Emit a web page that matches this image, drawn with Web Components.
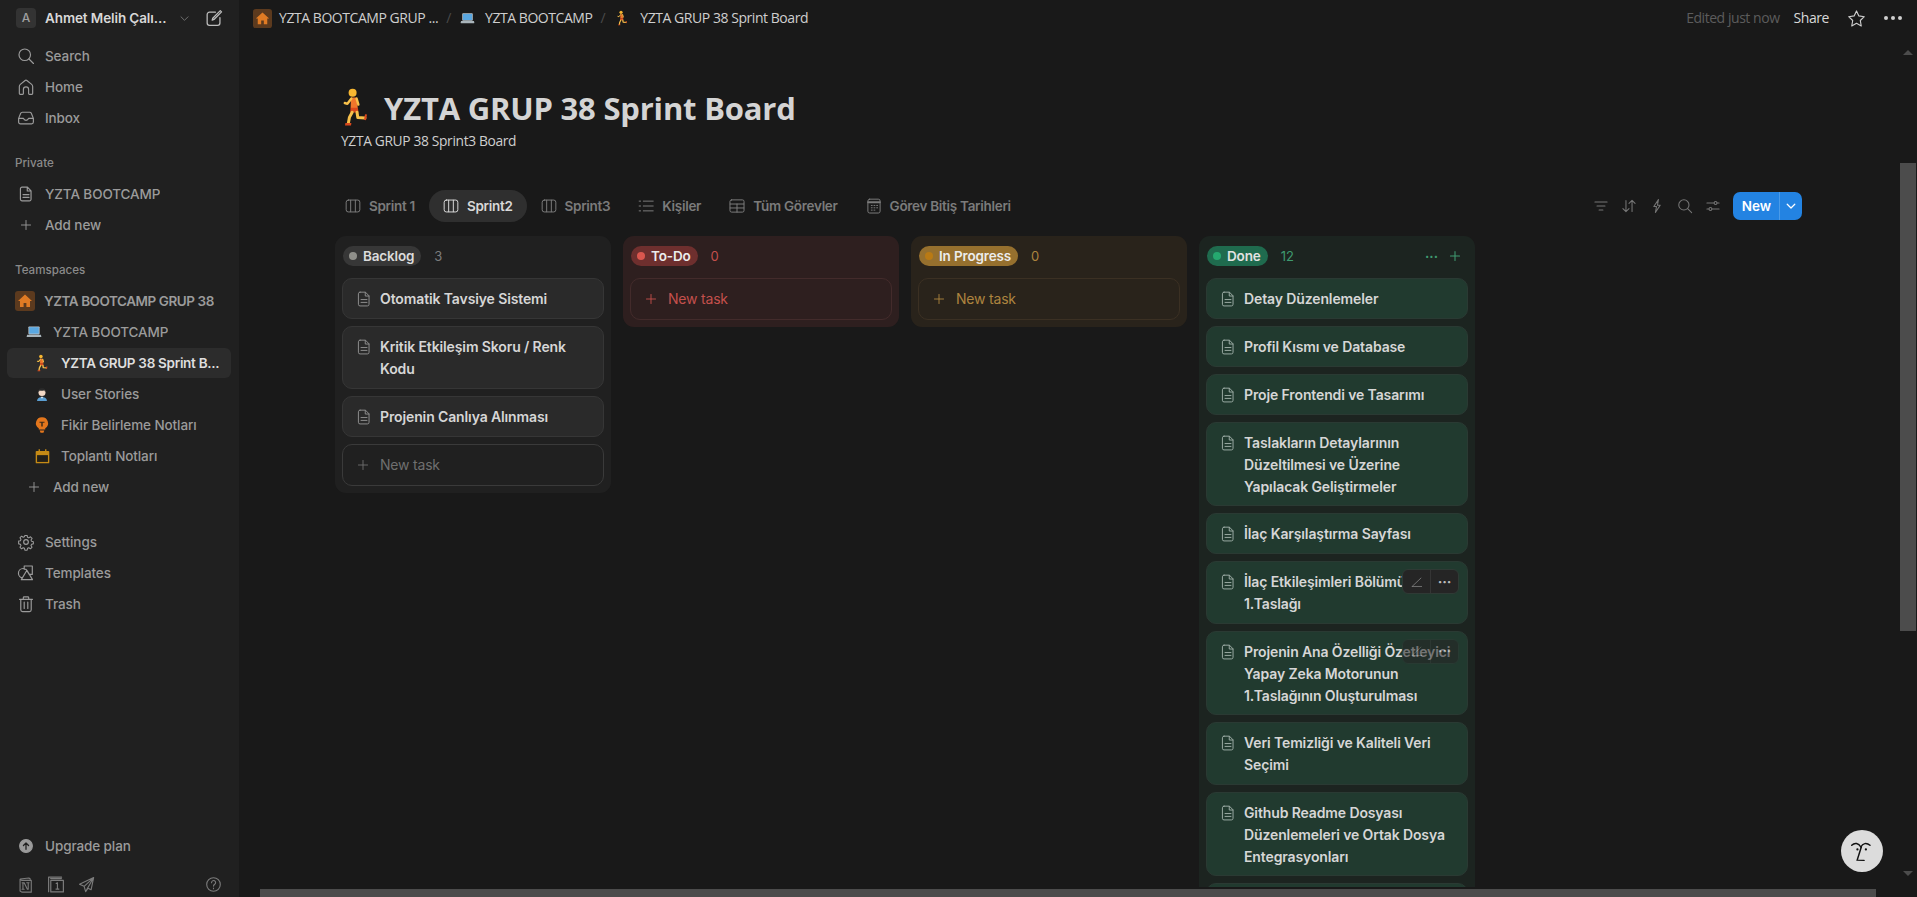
<!DOCTYPE html>
<html lang="tr">
<head>
<meta charset="utf-8">
<title>YZTA GRUP 38 Sprint Board</title>
<style>
  html, body { margin: 0; height: 100%; background: #191919; overflow: hidden; }
  body { font-family: Inter, "Liberation Sans", sans-serif; }
</style>
</head>
<body>
<notion-app></notion-app>

<script>
// stroke icons, all on a 20x20 box
const ICONS = {
  search: '<circle cx="8.6" cy="8.6" r="6.4"/><path d="M13.3 13.3l5 5"/>',
  home: '<path d="M2.6 17.2V9.4c0-1 .4-1.7 1.1-2.3l5-4.1a2 2 0 0 1 2.6 0l5 4.1c.7.6 1.1 1.3 1.1 2.3v7.8a.9.9 0 0 1-.9.9h-2.7a.9.9 0 0 1-.9-.9v-4.4a2.9 2.9 0 0 0-5.8 0v4.4a.9.9 0 0 1-.9.9H3.5a.9.9 0 0 1-.9-.9z"/>',
  inbox: '<path d="M1.8 10.4l2.3-5.6a2 2 0 0 1 1.8-1.2h8.2a2 2 0 0 1 1.8 1.2l2.3 5.6v4.1a2 2 0 0 1-2 2H3.8a2 2 0 0 1-2-2zM1.8 10.4h5.4a2.9 2.9 0 0 0 5.6 0h5.4"/>',
  doc: '<path d="M5.6 2.4h6l4 4.1v9.4a1.8 1.8 0 0 1-1.8 1.8H5.6a1.8 1.8 0 0 1-1.8-1.8V4.2a1.8 1.8 0 0 1 1.8-1.8zM11.4 2.6v4.1h4.1M6.7 10.6h6.6M6.7 13.8h6.6"/>',
  plus: '<path d="M10 3.5v13M3.5 10h13"/>',
  gear: '<circle cx="10" cy="10" r="2.6"/><path d="M8.6 1.9h2.8l.5 2.3 1.6.7 2-1.3 2 2-1.3 2 .7 1.6 2.2.5v2.6l-2.2.5-.7 1.6 1.3 2-2 2-2-1.3-1.6.7-.5 2.3H8.6l-.5-2.3-1.6-.7-2 1.3-2-2 1.3-2-.7-1.6-2.2-.5V8.9l2.2-.5.7-1.6-1.3-2 2-2 2 1.3 1.6-.7z" transform="translate(1 1) scale(.9)"/>',
  templates: '<circle cx="6.8" cy="10.2" r="5.2"/><path d="M8 2.2h9v9.4h-3.4L10 5.8H8zM11 7l6.2 10.4H4.8z" fill="#202020"/>',
  trash: '<path d="M2.8 4.8h14.4M7 4.6V3a1 1 0 0 1 1-1h4a1 1 0 0 1 1 1v1.6M4.2 4.8v11.6a2 2 0 0 0 2 2h7.6a2 2 0 0 0 2-2V4.8M8 8v7M12 8v7"/>',
  upgrade: '<circle cx="10" cy="10" r="8" fill="currentColor"/><path d="M10 14.2V6.4M6.8 9.4L10 6.2l3.2 3.2" stroke="#202020" stroke-width="1.6"/>',
  notion: '<path d="M3.6 3.8v13.8l2 1.4h11.2V5.2H5.4zM3.8 3.6L14 2.4l1.6 1.2M7 8v7.6M7 8.2h1.6l3.6 7.4h1V8M6 8h2.6M11.4 8h2.8M6 15.6h2.4" />',
  pages: '<path d="M4 4h12M1.8 18.6V2.4h14.4"/><rect x="4.2" y="6" width="14" height="12.8"/><path d="M10.2 9.4l1.4-.8v7M10 15.6h3.2"/>',
  send: '<path d="M18.4 1.8L1.8 9.6l5.4 2.6 1.8 6.2 2.8-4 3.6 1.8zM7.2 12.2L18.4 1.8 9 18.4"/>',
  help: '<circle cx="10" cy="10" r="8"/><path d="M7.7 7.8a2.4 2.4 0 1 1 3.7 2c-.9.6-1.4 1-1.4 2.1M10 14.3v.6"/>',
  board: '<rect x="2.4" y="3.4" width="15.2" height="13.2" rx="2.4"/><path d="M7.4 3.6v12.8M12.6 3.6v12.8"/>',
  list: '<path d="M7 4.6h11M7 10h11M7 15.4h11M2.4 4.6h1.6M2.4 10h1.6M2.4 15.4h1.6"/>',
  table: '<rect x="2.2" y="3.2" width="15.6" height="13.6" rx="1.8"/><path d="M2.4 7.8h15.2M2.4 12.2h15.2M10 7.8v9"/>',
  calendar: '<rect x="3.2" y="2.4" width="13.6" height="15.4" rx="2"/><path d="M3.6 5.8h12.8" stroke-width="2.4"/><path d="M7 9.4h1M10 9.4h1M13 9.4h1M7 12h1M10 12h1M13 12h1M7 14.6h1M10 14.6h1"/>',
  filter: '<path d="M2.4 5h15.2M5 10h10M7.6 15h4.8"/>',
  sort: '<path d="M6.2 3v14M2.4 13.2L6.2 17l3.8-3.8M13.8 17V3M10 6.8L13.8 3l3.8 3.8"/>',
  bolt: '<path d="M11.8 2L6 10.6h3.4L8 18l6-9h-3.4z"/>',
  sliders: '<path d="M2.4 6.2h9M15 6.2h2.6M2.4 13.8h2.6M8.6 13.8h9"/><circle cx="13.2" cy="6.2" r="1.8"/><circle cx="6.8" cy="13.8" r="1.8"/>',
  chevron: '<path d="M4.6 7.4L10 12.8l5.4-5.4"/>',
  compose: '<path d="M16.6 9.6v6a2.6 2.6 0 0 1-2.6 2.6H5a2.6 2.6 0 0 1-2.6-2.6V6.2A2.6 2.6 0 0 1 5 3.6h6.6M8 12.4l.6-2.2L17 1.8l1.4 1.4L10 11.6z"/>',
  star: '<path d="M10 2l2.5 5.3 5.7.8-4.2 4 1 5.8-5-2.8-5 2.8 1-5.8-4.2-4 5.7-.8z"/>',
  edit: '<path d="M3 16.4h13.6M3.4 16L15.6 4.4"/>',
};

function icon(name, size, sw) {
  return `<svg width="${size}" height="${size}" viewBox="0 0 20 20" fill="none" stroke="currentColor" stroke-width="${sw || 1.3}" stroke-linecap="round" stroke-linejoin="round">${ICONS[name]}</svg>`;
}

// the coloured page icons of the workspace
const EMOJI = {
  house: '<rect width="20" height="20" rx="3" fill="#5c3a1e"/><path d="M10 3.6L3 10h2v6h3.6v-4h2.8v4H15v-6h2z" fill="#e07b24"/>',
  laptop: '<rect x="3" y="3" width="14" height="10" rx="1" fill="#b8c4cc"/><rect x="4" y="4" width="12" height="8" fill="#5aa7e0"/><path d="M1.4 13.4h17.2l.6 2.4a.6.6 0 0 1-.6.6H1.4a.6.6 0 0 1-.6-.6z" fill="#a9b4ba"/>',
  runner: '<circle cx="8.8" cy="2.9" r="2" fill="#f7b731"/><path d="M8 5.2h2.8l.6 5.4H7.8z" fill="#f0762b"/><path d="M8.2 5.8L6.2 8.4 4.9 8M10.8 5.8l.9 3" stroke="#f7c04a" stroke-width="1.2" fill="none" stroke-linecap="round" stroke-linejoin="round"/><path d="M7.8 10.4h3.6l.4 2.4H7.6z" fill="#d9481c"/><path d="M8.6 12.6l-1.4 2.6-.5 2.8M11 12.6l.4 2.6 3.6.3" stroke="#f7c04a" stroke-width="1.5" fill="none" stroke-linecap="round" stroke-linejoin="round"/><path d="M5.2 18h3l-.2 1.2H5zM15 13.6l1 .2-.5 2.8-1-.2z" fill="#d9481c"/>',
  person: '<path d="M3.8 18.6c0-3.4 2.8-5 6.2-5s6.2 1.6 6.2 5z" fill="#5b9ed1"/><path d="M8.4 13.4h3.2L10 16z" fill="#eef3f6"/><circle cx="10" cy="8" r="4.4" fill="#f3d9c6"/><path d="M5.4 7.6c0-3.4 2-5 4.6-5s4.6 1.6 4.6 5c-1-.4-1.4-1.6-1.6-2.2-2 .8-4.4.8-6 .2-.4 1-.8 1.6-1.6 2z" fill="#2a2a2a"/>',
  bulb: '<path d="M10 1.4a6.6 6.6 0 0 0-3.6 12.2V15h7.2v-1.4A6.6 6.6 0 0 0 10 1.4z" fill="#e3761c"/><path d="M7.2 6.4h5.6v1.2H10.8v4H9.2v-4H7.2z" fill="#3b2a1a"/><path d="M7.4 16.2h5.2l-1 2.4H8.4z" fill="#e3761c"/>',
  cal: '<rect x="2" y="3.4" width="16" height="14.6" rx="1" fill="#c58a15"/><rect x="3.6" y="8.4" width="12.8" height="8" fill="#232019"/><path d="M5.4 1.6h1.6v3H5.4zM13 1.6h1.6v3H13z" fill="#c58a15"/>',
};

function emoji(name, size) {
  return `<svg width="${size}" height="${size}" viewBox="0 0 20 20">${EMOJI[name]}</svg>`;
}

class NavItem extends HTMLElement {
  connectedCallback() {
    const level = Number(this.getAttribute("level") || 0);
    const glyph = this.getAttribute("emoji")
      ? emoji(this.getAttribute("emoji"), Number(this.getAttribute("size") || 17))
      : icon(this.getAttribute("icon"), Number(this.getAttribute("size") || 18));
    this.attachShadow({ mode: "open" }).innerHTML = `
      <style>
        :host { display: flex; align-items: center; height: 30px; gap: 9px; margin: 0 8px 1px 7px;
                padding-left: ${9 + level * 8}px; border-radius: 6px; color: #9b9b9b;
                font: 500 13.5px/20px Inter, sans-serif; white-space: nowrap; letter-spacing: -.1px; }
        :host([active]) { background: #2c2c2c; color: #dedede; font-weight: 600; letter-spacing: -.3px; }
        :host([strong]) { font-weight: 600; letter-spacing: -.45px; }
        .i { width: 20px; height: 20px; display: flex; align-items: center; justify-content: center; flex: none; }
        .t { overflow: hidden; text-overflow: ellipsis; }
        svg { display: block; }
      </style>
      <span class="i">${glyph}</span><span class="t"><slot></slot></span>`;
  }
}
customElements.define("nav-item", NavItem);

class NavLabel extends HTMLElement {
  constructor() {
    super();
    this.attachShadow({ mode: "open" }).innerHTML = `
      <style>
        :host { display: block; padding: 0 0 0 15px; height: 20px; margin-bottom: 6px;
                font: 500 11.6px/20px Inter, sans-serif; color: #8a8a8a; }
      </style><slot></slot>`;
  }
}
customElements.define("nav-label", NavLabel);

class AppSidebar extends HTMLElement {
  constructor() {
    super();
    this.attachShadow({ mode: "open" }).innerHTML = `
      <style>
        :host { display: flex; flex-direction: column; width: 239px; flex: none; height: 897px;
                background: #202020; box-sizing: border-box; }
        .account { display: flex; align-items: center; height: 36px; padding: 0 16px 0 16px; color: #d8d8d8;
                   font: 600 13.5px/20px Inter, sans-serif; letter-spacing: -.1px; }
        .avatar { width: 20px; height: 20px; margin-right: 9px; border-radius: 4px; background: #333;
                  color: #a0a0a0; font: 500 12px/20px Inter, sans-serif; text-align: center; flex: none; }
        .name { flex: 1; white-space: nowrap; overflow: hidden; }
        .chev { color: #7d7d7d; margin: 0 14px 0 0; display: flex; }
        .new { color: #bdbdbd; display: flex; }
        .top { padding-top: 5px; }
        .private { margin-top: 19px; }
        .teams { margin-top: 19px; }
        .foot { margin-top: 24px; }
        .bottom { margin-top: auto; }
        .tools { display: flex; align-items: center; gap: 13px; height: 20px; padding: 0 17px; margin: 13px 0 3px; color: #7b7b7b; }
        .tools .help { margin-left: auto; margin-right: 0; }
        svg { display: block; }
      </style>
      <div class="account">
        <span class="avatar">A</span>
        <span class="name">Ahmet Melih Çalı...</span>
        <span class="chev">${icon("chevron", 13, 1.3)}</span>
        <span class="new">${icon("compose", 18, 1.4)}</span>
      </div>
      <div class="top">
        <nav-item icon="search">Search</nav-item>
        <nav-item icon="home">Home</nav-item>
        <nav-item icon="inbox">Inbox</nav-item>
      </div>
      <div class="private">
        <nav-label>Private</nav-label>
        <nav-item icon="doc">YZTA BOOTCAMP</nav-item>
        <nav-item icon="plus" size="14">Add new</nav-item>
      </div>
      <div class="teams">
        <nav-label>Teamspaces</nav-label>
        <nav-item emoji="house" size="20" strong style="padding-left:8px">YZTA BOOTCAMP GRUP 38</nav-item>
        <nav-item emoji="laptop" size="16" level="1">YZTA BOOTCAMP</nav-item>
        <nav-item emoji="runner" size="18" level="2" active>YZTA GRUP 38 Sprint B...</nav-item>
        <nav-item emoji="person" size="16" level="2">User Stories</nav-item>
        <nav-item emoji="bulb" size="18" level="2">Fikir Belirleme Notları</nav-item>
        <nav-item emoji="cal" size="17" level="2">Toplantı Notları</nav-item>
        <nav-item icon="plus" size="14" level="1">Add new</nav-item>
      </div>
      <div class="foot">
        <nav-item icon="gear">Settings</nav-item>
        <nav-item icon="templates">Templates</nav-item>
        <nav-item icon="trash">Trash</nav-item>
      </div>
      <div class="bottom">
        <nav-item icon="upgrade" size="16">Upgrade plan</nav-item>
        <div class="tools">
          ${icon("notion", 17)}${icon("pages", 18)}${icon("send", 17)}
          <span class="help">${icon("help", 17)}</span>
        </div>
      </div>`;
  }
}
customElements.define("app-sidebar", AppSidebar);

class AppTopbar extends HTMLElement {
  constructor() {
    super();
    this.attachShadow({ mode: "open" }).innerHTML = `
      <style>
        :host { display: flex; align-items: center; height: 36px; flex: none; padding: 0 15px 0 14px;
                font: 400 14px/20px "Open Sans", sans-serif; color: #cfcfcf; letter-spacing: -.45px; }
        .crumb { display: flex; align-items: center; gap: 7px; }
        .sep { color: #4a4a4a; margin: 0 9px 0 8px; }
        .right { margin-left: auto; display: flex; align-items: center; }
        .edited { color: #5c5c5c; margin-right: 14px; }
        .share { color: #d8d8d8; margin-right: 18px; }
        .star { color: #cfcfcf; margin-right: 18px; display: flex; }
        .dots { display: flex; gap: 3px; }
        .dots i { width: 4px; height: 4px; border-radius: 50%; background: #cfcfcf; }
        svg { display: block; }
      </style>
      <span class="crumb">${emoji("house", 19)}YZTA BOOTCAMP GRUP ...</span><span class="sep">/</span>
      <span class="crumb">${emoji("laptop", 15)}&nbsp;YZTA BOOTCAMP</span><span class="sep">/</span>
      <span class="crumb">${emoji("runner", 16)}&nbsp;YZTA GRUP 38 Sprint Board</span>
      <span class="right">
        <span class="edited">Edited just now</span>
        <span class="share">Share</span>
        <span class="star">${icon("star", 19, 1.2)}</span>
        <span class="dots"><i></i><i></i><i></i></span>
      </span>`;
  }
}
customElements.define("app-topbar", AppTopbar);

class ViewTab extends HTMLElement {
  connectedCallback() {
    this.attachShadow({ mode: "open" }).innerHTML = `
      <style>
        :host { display: flex; align-items: center; gap: 7px; height: 32px; padding: 0 14px 0 13px; box-sizing: border-box;
                border-radius: 16px; color: #7b7b7b; white-space: nowrap;
                font: 600 13.5px/20px Inter, sans-serif; letter-spacing: -.3px; }
        :host([active]) { background: #2f2f2f; color: #d8d8d8; }
        svg { display: block; }
      </style>
      ${icon(this.getAttribute("icon"), 18, 1.1)}<slot></slot>`;
  }
}
customElements.define("view-tab", ViewTab);

class BoardToolbar extends HTMLElement {
  constructor() {
    super();
    this.attachShadow({ mode: "open" }).innerHTML = `
      <style>
        :host { display: flex; align-items: center; height: 32px; }
        .tabs { display: flex; align-items: center; margin-left: -4px; }
        .tools { margin-left: auto; display: flex; align-items: center; gap: 12px; color: #767676; }
        .new { display: flex; align-items: center; height: 28px; border-radius: 7px; overflow: hidden;
               background: #2383e2; color: #fff; font: 600 13.5px/28px Inter, sans-serif; }
        .new b { font-weight: 600; padding: 0 8px 0 9px; border-right: 1px solid #4a9be9; }
        .new span { display: flex; padding: 0 4px 0 4px; }
        svg { display: block; }
      </style>
      <div class="tabs"><slot></slot></div>
      <div class="tools">
        ${icon("filter", 16)}${icon("sort", 16)}${icon("bolt", 16)}${icon("search", 16)}${icon("sliders", 16)}
        <div class="new"><b>New</b><span>${icon("chevron", 14, 1.8)}</span></div>
      </div>`;
  }
}
customElements.define("board-toolbar", BoardToolbar);

const TONES = {
  gray:   { col: "#202020", card: "#2a2a2a", line: "#363636", chip: "#373737", dot: "#8f8f8a", count: "#7c7c7c", chipText: "#dcdcdc", add: "#6f6f6f", addLine: "#3a3a3a" },
  red:    { col: "#2e1f1f", card: "#3a2424", line: "#412b2b", chip: "#6e2f2e", dot: "#d9564e", count: "#c4504c", chipText: "#ececec", add: "#c4504c", addLine: "#432b2b" },
  orange: { col: "#29231b", card: "#352b1f", line: "#3a2f22", chip: "#96702e", dot: "#b97a14", count: "#ad843f", chipText: "#ececec", add: "#ad843f", addLine: "#3b3023" },
  green:  { col: "#1c2420", card: "#213a2f", line: "#2a3a33", chip: "#1f6b4e", dot: "#25a86f", count: "#3f9a70", chipText: "#e2e2e2", add: "#3f9a70", addLine: "#2a3a33" },
};

class BoardColumn extends HTMLElement {
  connectedCallback() {
    const t = TONES[this.getAttribute("tone")];
    const more = this.hasAttribute("actions")
      ? `<span class="acts"><span>···</span><span class="pl">${icon("plus", 14, 1.5)}</span></span>` : "";
    const add = this.hasAttribute("no-add") ? "" : `<div class="add"><span class="pl">${icon("plus", 14, 1.3)}</span>New task</div>`;
    this.attachShadow({ mode: "open" }).innerHTML = `
      <style>
        :host { display: block; width: 276px; flex: none; align-self: flex-start; box-sizing: border-box;
                padding: 10px 7px 7px; border-radius: 11px; background: ${t.col};
                --card: ${t.card}; --card-line: ${t.line}; }
        .head { display: flex; align-items: center; height: 20px; padding-left: 1px; margin-bottom: 12px; color: ${t.count};
                font: 400 13px/20px Inter, sans-serif; }
        .chip { display: flex; align-items: center; gap: 6px; height: 20px; padding: 0 7px 0 6px; border-radius: 10px; margin-right: 13px;
                background: ${t.chip}; color: ${t.chipText}; font: 600 13.5px/20px Inter, sans-serif; letter-spacing: -.15px; }
        .chip i { width: 8px; height: 8px; border-radius: 50%; background: ${t.dot}; }
        .acts { margin-left: auto; display: flex; align-items: center; gap: 10px; padding-right: 6px; font-weight: 700; }
        .list { display: flex; flex-direction: column; gap: 7px; }
        .add { display: flex; align-items: center; gap: 10px; height: 42px; box-sizing: border-box; padding-left: 13px;
               border: 1px solid ${t.addLine}; border-radius: 10px; color: ${t.add};
               font: 400 14px/20px Inter, sans-serif; letter-spacing: -.2px; }
        .add .pl, .acts .pl { display: flex; }
        svg { display: block; }
      </style>
      <div class="head"><span class="chip"><i></i>${this.getAttribute("title")}</span>${this.getAttribute("count")}${more}</div>
      <div class="list"><slot></slot>${add}</div>`;
  }
}
customElements.define("board-column", BoardColumn);

class TaskCard extends HTMLElement {
  connectedCallback() {
    const hover = this.getAttribute("hover");
    const tools = hover
      ? `<div class="tools" style="opacity:${hover}"><span>${icon("edit", 14, 1)}</span><span class="d">···</span></div>` : "";
    this.attachShadow({ mode: "open" }).innerHTML = `
      <style>
        :host { display: flex; position: relative; gap: 7px; box-sizing: border-box; padding: 9px 10px 8px 12px;
                border-radius: 10px; background: var(--card); border: 1px solid var(--card-line);
                color: #d6d6d6; font: 600 14px/21.8px Inter, sans-serif; letter-spacing: -.12px; flex: none; }
        .ic { color: #8d8d8d; flex: none; height: 22px; display: flex; align-items: center; }
        :host-context(board-column[tone="green"]) .ic { color: #9aaaa3; }
        .tools { position: absolute; top: 7px; right: 8px; display: flex; height: 25px; width: 57px; box-sizing: border-box;
                 background: #252525; border: 1px solid #2f3a35; border-radius: 6px; color: #8f8f8f; }
        .tools span { flex: 1; display: flex; align-items: center; justify-content: center; line-height: 1; font-weight: 700; }
        .tools .d { border-left: 1px solid #353535; color: #bcbcbc; }
        svg { display: block; }
      </style>
      <span class="ic">${icon("doc", 18, 1.1)}</span><span><slot></slot></span>${tools}`;
  }
}
customElements.define("task-card", TaskCard);

class FakeScrollbars extends HTMLElement {
  constructor() {
    super();
    this.attachShadow({ mode: "open" }).innerHTML = `
      <style>
        :host { display: block; position: absolute; inset: 0; pointer-events: none; }
        .v, .h { position: absolute; background: #4c4c4c; }
        .v { left: 1661px; width: 16px; top: 163px; height: 468px; }
        .h { left: 21px; width: 1616px; top: 889px; height: 8px; }
        .a { position: absolute; width: 0; height: 0; border: 5px solid transparent; }
        .up { left: 1664px; top: 45px; border-bottom-color: #4c4c4c; }
        .down { left: 1664px; top: 871px; border-top-color: #4c4c4c; }
      </style>
      <div class="a up"></div><div class="v"></div><div class="a down"></div><div class="h"></div>`;
  }
}
customElements.define("fake-scrollbars", FakeScrollbars);

class AssistantBubble extends HTMLElement {
  constructor() {
    super();
    this.attachShadow({ mode: "open" }).innerHTML = `
      <style>
        :host { position: absolute; right: 34px; bottom: 25px; width: 42px; height: 42px; border-radius: 50%;
                background: #dcdcdc; display: flex; align-items: center; justify-content: center; }
      </style>
      <svg width="32" height="32" viewBox="0 0 28 28" fill="none" stroke="#111" stroke-width="1.3" stroke-linecap="round">
        <path d="M5 9c2.6-2.6 6-2 8 1.5 1.6-3.4 5-4 8-1.5"/>
        <path d="M13.4 10.5l-3.6 11.5 6 .2"/>
        <circle cx="10" cy="12.6" r="1" fill="#111" stroke="none"/>
        <circle cx="17.4" cy="12.6" r="1" fill="#111" stroke="none"/>
      </svg>`;
  }
}
customElements.define("assistant-bubble", AssistantBubble);

class BoardPage extends HTMLElement {
  constructor() {
    super();
    this.attachShadow({ mode: "open" }).innerHTML = `
      <style>
        :host { display: block; flex: 1; min-height: 0; overflow: hidden; padding: 52px 115px 0 96px;
                margin-bottom: 10px; box-sizing: border-box; }
        .title { display: flex; align-items: center; gap: 9px; height: 40px; color: #d4d4d4;
                 font: 700 31px/40px "Open Sans", sans-serif; letter-spacing: -.2px; white-space: nowrap; }
        .title svg { display: block; margin-top: -2px; }
        .sub { margin: 3px 0 39px 6px; color: #cfcfcf; font: 400 13.8px/20px "Open Sans", sans-serif; letter-spacing: -.35px; }
        .board { display: flex; gap: 12px; margin-top: 14px; }
      </style>
      <div class="title">${emoji("runner", 40)}<span>YZTA GRUP 38 Sprint Board</span></div>
      <div class="sub">YZTA GRUP 38 Sprint3 Board</div>
      <slot name="toolbar"></slot>
      <div class="board"><slot></slot></div>`;
  }
}
customElements.define("board-page", BoardPage);

class NotionApp extends HTMLElement {
  constructor() {
    super();
    this.attachShadow({ mode: "open" }).innerHTML = `
      <style>
        :host { display: flex; width: 1917px; height: 897px; overflow: hidden; background: #191919; }
        main { position: relative; flex: 1; min-width: 0; display: flex; flex-direction: column; height: 897px; }
      </style>
      <app-sidebar></app-sidebar>
      <main>
        <app-topbar></app-topbar>
        <board-page>
          <board-toolbar slot="toolbar">
            <view-tab icon="board">Sprint 1</view-tab>
            <view-tab icon="board" active>Sprint2</view-tab>
            <view-tab icon="board">Sprint3</view-tab>
            <view-tab icon="list">Kişiler</view-tab>
            <view-tab icon="table">Tüm Görevler</view-tab>
            <view-tab icon="calendar">Görev Bitiş Tarihleri</view-tab>
          </board-toolbar>
          <board-column tone="gray" title="Backlog" count="3">
            <task-card>Otomatik Tavsiye Sistemi</task-card>
            <task-card>Kritik Etkileşim Skoru / Renk<br>Kodu</task-card>
            <task-card>Projenin Canlıya Alınması</task-card>
          </board-column>
          <board-column tone="red" title="To-Do" count="0"></board-column>
          <board-column tone="orange" title="In Progress" count="0"></board-column>
          <board-column tone="green" title="Done" count="12" actions no-add>
            <task-card>Detay Düzenlemeler</task-card>
            <task-card>Profil Kısmı ve Database</task-card>
            <task-card>Proje Frontendi ve Tasarımı</task-card>
            <task-card>Taslakların Detaylarının<br>Düzeltilmesi ve Üzerine<br>Yapılacak Geliştirmeler</task-card>
            <task-card>İlaç Karşılaştırma Sayfası</task-card>
            <task-card hover="1">İlaç Etkileşimleri Bölümü<br>1.Taslağı</task-card>
            <task-card hover=".55">Projenin Ana Özelliği Özetleyici<br>Yapay Zeka Motorunun<br>1.Taslağının Oluşturulması</task-card>
            <task-card>Veri Temizliği ve Kaliteli Veri<br>Seçimi</task-card>
            <task-card>Github Readme Dosyası<br>Düzenlemeleri ve Ortak Dosya<br>Entegrasyonları</task-card>
            <task-card>&nbsp;</task-card>
          </board-column>
        </board-page>
        <fake-scrollbars></fake-scrollbars>
        <assistant-bubble></assistant-bubble>
      </main>`;
  }
}
customElements.define("notion-app", NotionApp);
</script>
</body>
</html>
